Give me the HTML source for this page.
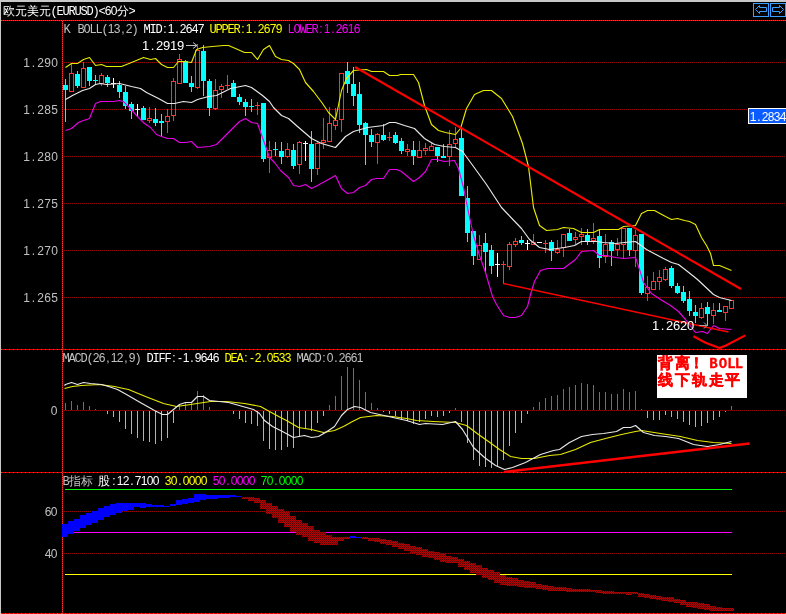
<!DOCTYPE html><html><head><meta charset="utf-8"><style>html,body{margin:0;padding:0;background:#000;overflow:hidden}svg{display:block;will-change:transform}text{font-family:"Liberation Mono",monospace}</style></head><body>
<svg width="786" height="614" viewBox="0 0 786 614">
<defs><pattern id="chk" width="2" height="2" patternUnits="userSpaceOnUse"><rect width="2" height="2" fill="#5c0000"/><rect width="1" height="1" fill="#b80000"/><rect x="1" y="1" width="1" height="1" fill="#b80000"/></pattern></defs>
<rect width="786" height="614" fill="#000"/>
<rect x="0" y="0" width="786" height="2" fill="#c8c8c8"/>
<rect x="0" y="0" width="1" height="614" fill="#c8c8c8"/>
<g shape-rendering="crispEdges">
<line x1="64" y1="62.5" x2="786" y2="62.5" stroke="#980000" stroke-width="1" stroke-dasharray="1 1"/>
<line x1="64" y1="109.5" x2="786" y2="109.5" stroke="#980000" stroke-width="1" stroke-dasharray="1 1"/>
<line x1="64" y1="156.5" x2="786" y2="156.5" stroke="#980000" stroke-width="1" stroke-dasharray="1 1"/>
<line x1="64" y1="203.5" x2="786" y2="203.5" stroke="#980000" stroke-width="1" stroke-dasharray="1 1"/>
<line x1="64" y1="250.5" x2="786" y2="250.5" stroke="#980000" stroke-width="1" stroke-dasharray="1 1"/>
<line x1="64" y1="297.5" x2="786" y2="297.5" stroke="#980000" stroke-width="1" stroke-dasharray="1 1"/>
<line x1="64" y1="410.5" x2="786" y2="410.5" stroke="#980000" stroke-width="1" stroke-dasharray="1 1"/>
<line x1="64" y1="511.5" x2="786" y2="511.5" stroke="#980000" stroke-width="1" stroke-dasharray="1 1"/>
<line x1="64" y1="553.5" x2="786" y2="553.5" stroke="#980000" stroke-width="1" stroke-dasharray="1 1"/>
<rect x="1" y="20" width="785" height="1" fill="#d80000"/>
<line x1="1" y1="20.5" x2="786" y2="20.5" stroke="#e85050" stroke-width="1" stroke-dasharray="1 1"/>
<rect x="1" y="349" width="785" height="1" fill="#e00000"/>
<line x1="1" y1="349.5" x2="786" y2="349.5" stroke="#e85000" stroke-width="1" stroke-dasharray="1 3"/>
<rect x="1" y="472" width="785" height="1" fill="#e00000"/>
<line x1="1" y1="472.5" x2="786" y2="472.5" stroke="#e85000" stroke-width="1" stroke-dasharray="1 3"/>
<rect x="1" y="613" width="785" height="1" fill="#e00000"/>
<line x1="1" y1="613.5" x2="786" y2="613.5" stroke="#e85000" stroke-width="1" stroke-dasharray="1 3"/>
<rect x="62" y="20" width="1" height="594" fill="#c00000"/>
<line x1="62.5" y1="21" x2="62.5" y2="614" stroke="#e04848" stroke-width="1" stroke-dasharray="1 1"/>
<rect x="65" y="489" width="667" height="1" fill="#00ff00"/>
<rect x="65" y="532" width="667" height="1" fill="#ff00ff"/>
<rect x="65" y="574" width="667" height="1" fill="#ffff00"/>
<rect x="62" y="524" width="6" height="13" fill="#0000ff"/>
<rect x="68" y="521" width="6" height="13" fill="#0000ff"/>
<rect x="74" y="519" width="6" height="12" fill="#0000ff"/>
<rect x="80" y="515" width="6" height="13" fill="#0000ff"/>
<rect x="86" y="513" width="6" height="12" fill="#0000ff"/>
<rect x="92" y="511" width="6" height="12" fill="#0000ff"/>
<rect x="98" y="508" width="6" height="12" fill="#0000ff"/>
<rect x="104" y="506" width="6" height="11" fill="#0000ff"/>
<rect x="110" y="504" width="6" height="11" fill="#0000ff"/>
<rect x="116" y="503" width="6" height="10" fill="#0000ff"/>
<rect x="122" y="503" width="6" height="8" fill="#0000ff"/>
<rect x="128" y="503" width="6" height="7" fill="#0000ff"/>
<rect x="134" y="503" width="6" height="4" fill="#0000ff"/>
<rect x="140" y="503" width="6" height="5" fill="#0000ff"/>
<rect x="146" y="504" width="6" height="3" fill="#0000ff"/>
<rect x="152" y="505" width="6" height="2" fill="#0000ff"/>
<rect x="158" y="505" width="6" height="2" fill="#0000ff"/>
<rect x="164" y="506" width="6" height="1" fill="#0000ff"/>
<rect x="170" y="504" width="6" height="2" fill="#0000ff"/>
<rect x="176" y="500" width="6" height="5" fill="#0000ff"/>
<rect x="182" y="499" width="6" height="5" fill="#0000ff"/>
<rect x="188" y="498" width="6" height="5" fill="#0000ff"/>
<rect x="194" y="494" width="6" height="8" fill="#0000ff"/>
<rect x="200" y="494" width="6" height="6" fill="#0000ff"/>
<rect x="206" y="495" width="6" height="4" fill="#0000ff"/>
<rect x="212" y="495" width="6" height="4" fill="#0000ff"/>
<rect x="218" y="495" width="6" height="3" fill="#0000ff"/>
<rect x="224" y="495" width="6" height="3" fill="#0000ff"/>
<rect x="230" y="495" width="6" height="2" fill="#0000ff"/>
<rect x="236" y="496" width="6" height="1" fill="#0000ff"/>
<rect x="242" y="497" width="6" height="2" fill="url(#chk)"/>
<rect x="248" y="497" width="6" height="4" fill="url(#chk)"/>
<rect x="254" y="498" width="6" height="5" fill="url(#chk)"/>
<rect x="260" y="500" width="6" height="9" fill="url(#chk)"/>
<rect x="266" y="503" width="6" height="11" fill="url(#chk)"/>
<rect x="272" y="506" width="6" height="12" fill="url(#chk)"/>
<rect x="278" y="509" width="6" height="14" fill="url(#chk)"/>
<rect x="284" y="512" width="6" height="15" fill="url(#chk)"/>
<rect x="290" y="516" width="6" height="16" fill="url(#chk)"/>
<rect x="296" y="520" width="6" height="15" fill="url(#chk)"/>
<rect x="302" y="523" width="6" height="14" fill="url(#chk)"/>
<rect x="308" y="526" width="6" height="15" fill="url(#chk)"/>
<rect x="314" y="530" width="6" height="13" fill="url(#chk)"/>
<rect x="320" y="532" width="6" height="13" fill="url(#chk)"/>
<rect x="326" y="535" width="6" height="10" fill="url(#chk)"/>
<rect x="332" y="537" width="6" height="8" fill="url(#chk)"/>
<rect x="338" y="537" width="6" height="4" fill="url(#chk)"/>
<rect x="344" y="537" width="6" height="2" fill="url(#chk)"/>
<rect x="350" y="536" width="6" height="2" fill="#0000ff"/>
<rect x="356" y="537" width="6" height="1" fill="#0000ff"/>
<rect x="362" y="537" width="6" height="2" fill="url(#chk)"/>
<rect x="368" y="538" width="6" height="3" fill="url(#chk)"/>
<rect x="374" y="538" width="6" height="4" fill="url(#chk)"/>
<rect x="380" y="539" width="6" height="5" fill="url(#chk)"/>
<rect x="386" y="540" width="6" height="5" fill="url(#chk)"/>
<rect x="392" y="541" width="6" height="6" fill="url(#chk)"/>
<rect x="398" y="543" width="6" height="6" fill="url(#chk)"/>
<rect x="404" y="544" width="6" height="7" fill="url(#chk)"/>
<rect x="410" y="546" width="6" height="7" fill="url(#chk)"/>
<rect x="416" y="547" width="6" height="8" fill="url(#chk)"/>
<rect x="422" y="549" width="6" height="8" fill="url(#chk)"/>
<rect x="428" y="551" width="6" height="7" fill="url(#chk)"/>
<rect x="434" y="552" width="6" height="8" fill="url(#chk)"/>
<rect x="440" y="553" width="6" height="9" fill="url(#chk)"/>
<rect x="446" y="556" width="6" height="7" fill="url(#chk)"/>
<rect x="452" y="557" width="6" height="6" fill="url(#chk)"/>
<rect x="458" y="559" width="6" height="8" fill="url(#chk)"/>
<rect x="464" y="561" width="6" height="9" fill="url(#chk)"/>
<rect x="470" y="563" width="6" height="10" fill="url(#chk)"/>
<rect x="476" y="565" width="6" height="10" fill="url(#chk)"/>
<rect x="482" y="568" width="6" height="10" fill="url(#chk)"/>
<rect x="488" y="570" width="6" height="10" fill="url(#chk)"/>
<rect x="494" y="572" width="6" height="11" fill="url(#chk)"/>
<rect x="500" y="575" width="6" height="10" fill="url(#chk)"/>
<rect x="506" y="577" width="6" height="9" fill="url(#chk)"/>
<rect x="512" y="578" width="6" height="8" fill="url(#chk)"/>
<rect x="518" y="580" width="6" height="7" fill="url(#chk)"/>
<rect x="524" y="581" width="6" height="7" fill="url(#chk)"/>
<rect x="530" y="582" width="6" height="6" fill="url(#chk)"/>
<rect x="536" y="584" width="6" height="5" fill="url(#chk)"/>
<rect x="542" y="585" width="6" height="5" fill="url(#chk)"/>
<rect x="548" y="586" width="6" height="5" fill="url(#chk)"/>
<rect x="554" y="587" width="6" height="4" fill="url(#chk)"/>
<rect x="560" y="587" width="6" height="4" fill="url(#chk)"/>
<rect x="566" y="588" width="6" height="4" fill="url(#chk)"/>
<rect x="572" y="589" width="6" height="3" fill="url(#chk)"/>
<rect x="578" y="589" width="6" height="3" fill="url(#chk)"/>
<rect x="584" y="589" width="6" height="3" fill="url(#chk)"/>
<rect x="590" y="590" width="6" height="2" fill="url(#chk)"/>
<rect x="596" y="590" width="6" height="3" fill="url(#chk)"/>
<rect x="602" y="591" width="6" height="3" fill="url(#chk)"/>
<rect x="608" y="591" width="6" height="3" fill="url(#chk)"/>
<rect x="614" y="592" width="6" height="2" fill="url(#chk)"/>
<rect x="620" y="592" width="6" height="2" fill="url(#chk)"/>
<rect x="626" y="592" width="6" height="3" fill="url(#chk)"/>
<rect x="632" y="592" width="6" height="2" fill="url(#chk)"/>
<rect x="638" y="593" width="6" height="4" fill="url(#chk)"/>
<rect x="644" y="594" width="6" height="4" fill="url(#chk)"/>
<rect x="650" y="595" width="6" height="4" fill="url(#chk)"/>
<rect x="656" y="596" width="6" height="4" fill="url(#chk)"/>
<rect x="662" y="597" width="6" height="4" fill="url(#chk)"/>
<rect x="668" y="597" width="6" height="5" fill="url(#chk)"/>
<rect x="674" y="599" width="6" height="4" fill="url(#chk)"/>
<rect x="680" y="600" width="6" height="5" fill="url(#chk)"/>
<rect x="686" y="602" width="6" height="5" fill="url(#chk)"/>
<rect x="692" y="602" width="6" height="6" fill="url(#chk)"/>
<rect x="698" y="603" width="6" height="6" fill="url(#chk)"/>
<rect x="704" y="604" width="6" height="6" fill="url(#chk)"/>
<rect x="710" y="606" width="6" height="5" fill="url(#chk)"/>
<rect x="716" y="607" width="6" height="4" fill="url(#chk)"/>
<rect x="722" y="608" width="6" height="3" fill="url(#chk)"/>
<rect x="728" y="608" width="6" height="3" fill="url(#chk)"/>
<rect x="65" y="403" width="1" height="7" fill="#ff3232"/>
<rect x="71" y="401" width="1" height="9" fill="#ff3232"/>
<rect x="77" y="405" width="1" height="5" fill="#ff3232"/>
<rect x="83" y="402" width="1" height="8" fill="#ff3232"/>
<rect x="89" y="406" width="1" height="4" fill="#ff3232"/>
<rect x="95" y="409" width="1" height="1" fill="#ff3232"/>
<rect x="107" y="411" width="1" height="3" fill="#00ffff"/>
<rect x="113" y="411" width="1" height="6" fill="#00ffff"/>
<rect x="119" y="411" width="1" height="11" fill="#00ffff"/>
<rect x="125" y="411" width="1" height="18" fill="#00ffff"/>
<rect x="131" y="411" width="1" height="23" fill="#00ffff"/>
<rect x="137" y="411" width="1" height="27" fill="#00ffff"/>
<rect x="143" y="411" width="1" height="30" fill="#00ffff"/>
<rect x="149" y="411" width="1" height="31" fill="#00ffff"/>
<rect x="155" y="411" width="1" height="33" fill="#00ffff"/>
<rect x="161" y="411" width="1" height="30" fill="#00ffff"/>
<rect x="167" y="411" width="1" height="27" fill="#00ffff"/>
<rect x="173" y="411" width="1" height="12" fill="#00ffff"/>
<rect x="179" y="405" width="1" height="5" fill="#ff3232"/>
<rect x="185" y="402" width="1" height="8" fill="#ff3232"/>
<rect x="191" y="402" width="1" height="8" fill="#ff3232"/>
<rect x="197" y="391" width="1" height="19" fill="#ff3232"/>
<rect x="203" y="395" width="1" height="15" fill="#ff3232"/>
<rect x="209" y="407" width="1" height="3" fill="#ff3232"/>
<rect x="233" y="411" width="1" height="3" fill="#00ffff"/>
<rect x="239" y="411" width="1" height="8" fill="#00ffff"/>
<rect x="245" y="411" width="1" height="12" fill="#00ffff"/>
<rect x="251" y="411" width="1" height="13" fill="#00ffff"/>
<rect x="257" y="411" width="1" height="15" fill="#00ffff"/>
<rect x="263" y="411" width="1" height="30" fill="#00ffff"/>
<rect x="269" y="411" width="1" height="38" fill="#00ffff"/>
<rect x="275" y="411" width="1" height="39" fill="#00ffff"/>
<rect x="281" y="411" width="1" height="39" fill="#00ffff"/>
<rect x="287" y="411" width="1" height="36" fill="#00ffff"/>
<rect x="293" y="411" width="1" height="37" fill="#00ffff"/>
<rect x="299" y="411" width="1" height="25" fill="#00ffff"/>
<rect x="305" y="411" width="1" height="18" fill="#00ffff"/>
<rect x="311" y="411" width="1" height="20" fill="#00ffff"/>
<rect x="317" y="411" width="1" height="12" fill="#00ffff"/>
<rect x="323" y="411" width="1" height="5" fill="#00ffff"/>
<rect x="329" y="405" width="1" height="5" fill="#ff3232"/>
<rect x="335" y="396" width="1" height="14" fill="#ff3232"/>
<rect x="341" y="376" width="1" height="34" fill="#ff3232"/>
<rect x="347" y="367" width="1" height="43" fill="#ff3232"/>
<rect x="353" y="368" width="1" height="42" fill="#ff3232"/>
<rect x="359" y="380" width="1" height="30" fill="#ff3232"/>
<rect x="365" y="392" width="1" height="18" fill="#ff3232"/>
<rect x="371" y="403" width="1" height="7" fill="#ff3232"/>
<rect x="377" y="408" width="1" height="2" fill="#ff3232"/>
<rect x="383" y="411" width="1" height="1" fill="#00ffff"/>
<rect x="389" y="411" width="1" height="3" fill="#00ffff"/>
<rect x="395" y="411" width="1" height="5" fill="#00ffff"/>
<rect x="401" y="411" width="1" height="9" fill="#00ffff"/>
<rect x="407" y="411" width="1" height="10" fill="#00ffff"/>
<rect x="413" y="411" width="1" height="13" fill="#00ffff"/>
<rect x="419" y="411" width="1" height="11" fill="#00ffff"/>
<rect x="425" y="411" width="1" height="8" fill="#00ffff"/>
<rect x="431" y="411" width="1" height="5" fill="#00ffff"/>
<rect x="437" y="411" width="1" height="6" fill="#00ffff"/>
<rect x="443" y="411" width="1" height="5" fill="#00ffff"/>
<rect x="449" y="411" width="1" height="2" fill="#00ffff"/>
<rect x="455" y="408" width="1" height="2" fill="#ff3232"/>
<rect x="461" y="411" width="1" height="11" fill="#00ffff"/>
<rect x="467" y="411" width="1" height="32" fill="#00ffff"/>
<rect x="473" y="411" width="1" height="49" fill="#00ffff"/>
<rect x="479" y="411" width="1" height="55" fill="#00ffff"/>
<rect x="485" y="411" width="1" height="56" fill="#00ffff"/>
<rect x="491" y="411" width="1" height="57" fill="#00ffff"/>
<rect x="497" y="411" width="1" height="55" fill="#00ffff"/>
<rect x="503" y="411" width="1" height="49" fill="#00ffff"/>
<rect x="509" y="411" width="1" height="35" fill="#00ffff"/>
<rect x="515" y="411" width="1" height="22" fill="#00ffff"/>
<rect x="521" y="411" width="1" height="12" fill="#00ffff"/>
<rect x="527" y="411" width="1" height="3" fill="#00ffff"/>
<rect x="533" y="407" width="1" height="3" fill="#ff3232"/>
<rect x="539" y="402" width="1" height="8" fill="#ff3232"/>
<rect x="545" y="398" width="1" height="12" fill="#ff3232"/>
<rect x="551" y="396" width="1" height="14" fill="#ff3232"/>
<rect x="557" y="395" width="1" height="15" fill="#ff3232"/>
<rect x="563" y="389" width="1" height="21" fill="#ff3232"/>
<rect x="569" y="387" width="1" height="23" fill="#ff3232"/>
<rect x="575" y="385" width="1" height="25" fill="#ff3232"/>
<rect x="581" y="383" width="1" height="27" fill="#ff3232"/>
<rect x="587" y="384" width="1" height="26" fill="#ff3232"/>
<rect x="593" y="385" width="1" height="25" fill="#ff3232"/>
<rect x="599" y="392" width="1" height="18" fill="#ff3232"/>
<rect x="605" y="392" width="1" height="18" fill="#ff3232"/>
<rect x="611" y="394" width="1" height="16" fill="#ff3232"/>
<rect x="617" y="394" width="1" height="16" fill="#ff3232"/>
<rect x="623" y="389" width="1" height="21" fill="#ff3232"/>
<rect x="629" y="392" width="1" height="18" fill="#ff3232"/>
<rect x="635" y="391" width="1" height="19" fill="#ff3232"/>
<rect x="641" y="409" width="1" height="1" fill="#ff3232"/>
<rect x="647" y="411" width="1" height="7" fill="#00ffff"/>
<rect x="653" y="411" width="1" height="9" fill="#00ffff"/>
<rect x="659" y="411" width="1" height="9" fill="#00ffff"/>
<rect x="665" y="411" width="1" height="4" fill="#00ffff"/>
<rect x="671" y="411" width="1" height="6" fill="#00ffff"/>
<rect x="677" y="411" width="1" height="8" fill="#00ffff"/>
<rect x="683" y="411" width="1" height="11" fill="#00ffff"/>
<rect x="689" y="411" width="1" height="14" fill="#00ffff"/>
<rect x="695" y="411" width="1" height="16" fill="#00ffff"/>
<rect x="701" y="411" width="1" height="15" fill="#00ffff"/>
<rect x="707" y="411" width="1" height="12" fill="#00ffff"/>
<rect x="713" y="411" width="1" height="9" fill="#00ffff"/>
<rect x="719" y="411" width="1" height="6" fill="#00ffff"/>
<rect x="725" y="411" width="1" height="1" fill="#00ffff"/>
<rect x="731" y="406" width="1" height="4" fill="#ff3232"/>
<rect x="65" y="79" width="1" height="43" fill="#00ffff"/>
<rect x="63" y="85" width="5" height="5" fill="#00ffff"/>
<rect x="71" y="64" width="1" height="9" fill="#ff3232"/>
<rect x="71" y="91" width="1" height="1" fill="#ff3232"/>
<rect x="69.5" y="73.5" width="4" height="18" fill="none" stroke="#ff3232" stroke-width="1"/>
<rect x="77" y="71" width="1" height="17" fill="#00ffff"/>
<rect x="75" y="74" width="5" height="12" fill="#00ffff"/>
<rect x="83" y="62" width="1" height="6" fill="#ff3232"/>
<rect x="83" y="87" width="1" height="1" fill="#ff3232"/>
<rect x="81.5" y="68.5" width="4" height="19" fill="none" stroke="#ff3232" stroke-width="1"/>
<rect x="89" y="67" width="1" height="19" fill="#00ffff"/>
<rect x="87" y="67" width="5" height="14" fill="#00ffff"/>
<rect x="95" y="75" width="1" height="10" fill="#00ffff"/>
<rect x="93" y="80" width="5" height="1" fill="#00ffff"/>
<rect x="101" y="73" width="1" height="2" fill="#ff3232"/>
<rect x="101" y="83" width="1" height="3" fill="#ff3232"/>
<rect x="99.5" y="75.5" width="4" height="8" fill="none" stroke="#ff3232" stroke-width="1"/>
<rect x="107" y="75" width="1" height="12" fill="#00ffff"/>
<rect x="105" y="77" width="5" height="6" fill="#00ffff"/>
<rect x="113" y="78" width="1" height="10" fill="#ffffff"/>
<rect x="111" y="83" width="5" height="1" fill="#ffffff"/>
<rect x="119" y="81" width="1" height="17" fill="#00ffff"/>
<rect x="117" y="85" width="5" height="7" fill="#00ffff"/>
<rect x="125" y="86" width="1" height="23" fill="#00ffff"/>
<rect x="123" y="92" width="5" height="14" fill="#00ffff"/>
<rect x="131" y="102" width="1" height="17" fill="#00ffff"/>
<rect x="129" y="104" width="5" height="7" fill="#00ffff"/>
<rect x="137" y="104" width="1" height="13" fill="#ffffff"/>
<rect x="135" y="109" width="5" height="1" fill="#ffffff"/>
<rect x="143" y="106" width="1" height="14" fill="#00ffff"/>
<rect x="141" y="108" width="5" height="12" fill="#00ffff"/>
<rect x="149" y="107" width="1" height="11" fill="#ff3232"/>
<rect x="149" y="120" width="1" height="3" fill="#ff3232"/>
<rect x="147.5" y="118.5" width="4" height="2" fill="none" stroke="#ff3232" stroke-width="1"/>
<rect x="155" y="108" width="1" height="18" fill="#00ffff"/>
<rect x="153" y="119" width="5" height="4" fill="#00ffff"/>
<rect x="161" y="114" width="1" height="22" fill="#00ffff"/>
<rect x="159" y="121" width="5" height="2" fill="#00ffff"/>
<rect x="167" y="109" width="1" height="7" fill="#ff3232"/>
<rect x="167" y="121" width="1" height="12" fill="#ff3232"/>
<rect x="165.5" y="116.5" width="4" height="5" fill="none" stroke="#ff3232" stroke-width="1"/>
<rect x="173" y="78" width="1" height="3" fill="#ff3232"/>
<rect x="173" y="115" width="1" height="6" fill="#ff3232"/>
<rect x="171.5" y="81.5" width="4" height="34" fill="none" stroke="#ff3232" stroke-width="1"/>
<rect x="179" y="54" width="1" height="5" fill="#ff3232"/>
<rect x="177.5" y="59.5" width="4" height="24" fill="none" stroke="#ff3232" stroke-width="1"/>
<rect x="185" y="60" width="1" height="23" fill="#00ffff"/>
<rect x="183" y="61" width="5" height="22" fill="#00ffff"/>
<rect x="191" y="76" width="1" height="16" fill="#00ffff"/>
<rect x="189" y="83" width="5" height="4" fill="#00ffff"/>
<rect x="197" y="44" width="1" height="6" fill="#ff3232"/>
<rect x="197" y="87" width="1" height="2" fill="#ff3232"/>
<rect x="195.5" y="50.5" width="4" height="37" fill="none" stroke="#ff3232" stroke-width="1"/>
<rect x="203" y="45" width="1" height="51" fill="#00ffff"/>
<rect x="201" y="51" width="5" height="30" fill="#00ffff"/>
<rect x="209" y="79" width="1" height="37" fill="#00ffff"/>
<rect x="207" y="81" width="5" height="27" fill="#00ffff"/>
<rect x="215" y="79" width="1" height="11" fill="#ff3232"/>
<rect x="215" y="108" width="1" height="2" fill="#ff3232"/>
<rect x="213.5" y="90.5" width="4" height="18" fill="none" stroke="#ff3232" stroke-width="1"/>
<rect x="221" y="84" width="1" height="2" fill="#ff3232"/>
<rect x="221" y="89" width="1" height="9" fill="#ff3232"/>
<rect x="219.5" y="86.5" width="4" height="3" fill="none" stroke="#ff3232" stroke-width="1"/>
<rect x="227" y="75" width="1" height="14" fill="#ff3232"/>
<rect x="225" y="85" width="5" height="1" fill="#ff3232"/>
<rect x="233" y="80" width="1" height="17" fill="#00ffff"/>
<rect x="231" y="83" width="5" height="14" fill="#00ffff"/>
<rect x="239" y="94" width="1" height="11" fill="#00ffff"/>
<rect x="237" y="97" width="5" height="5" fill="#00ffff"/>
<rect x="245" y="99" width="1" height="17" fill="#00ffff"/>
<rect x="243" y="102" width="5" height="5" fill="#00ffff"/>
<rect x="251" y="99" width="1" height="13" fill="#00ffff"/>
<rect x="249" y="106" width="5" height="1" fill="#00ffff"/>
<rect x="257" y="102" width="1" height="13" fill="#ff3232"/>
<rect x="255" y="105" width="5" height="1" fill="#ff3232"/>
<rect x="263" y="103" width="1" height="59" fill="#00ffff"/>
<rect x="261" y="103" width="5" height="56" fill="#00ffff"/>
<rect x="269" y="141" width="1" height="9" fill="#ff3232"/>
<rect x="269" y="157" width="1" height="16" fill="#ff3232"/>
<rect x="267.5" y="150.5" width="4" height="7" fill="none" stroke="#ff3232" stroke-width="1"/>
<rect x="275" y="142" width="1" height="14" fill="#00ffff"/>
<rect x="273" y="149" width="5" height="1" fill="#00ffff"/>
<rect x="281" y="142" width="1" height="22" fill="#00ffff"/>
<rect x="279" y="151" width="5" height="6" fill="#00ffff"/>
<rect x="287" y="143" width="1" height="6" fill="#ff3232"/>
<rect x="287" y="156" width="1" height="2" fill="#ff3232"/>
<rect x="285.5" y="149.5" width="4" height="7" fill="none" stroke="#ff3232" stroke-width="1"/>
<rect x="293" y="144" width="1" height="25" fill="#00ffff"/>
<rect x="291" y="150" width="5" height="16" fill="#00ffff"/>
<rect x="299" y="141" width="1" height="1" fill="#ff3232"/>
<rect x="299" y="164" width="1" height="10" fill="#ff3232"/>
<rect x="297.5" y="142.5" width="4" height="22" fill="none" stroke="#ff3232" stroke-width="1"/>
<rect x="305" y="141" width="1" height="20" fill="#ffffff"/>
<rect x="303" y="143" width="5" height="1" fill="#ffffff"/>
<rect x="311" y="131" width="1" height="51" fill="#00ffff"/>
<rect x="309" y="144" width="5" height="25" fill="#00ffff"/>
<rect x="317" y="141" width="1" height="2" fill="#ff3232"/>
<rect x="317" y="168" width="1" height="7" fill="#ff3232"/>
<rect x="315.5" y="143.5" width="4" height="25" fill="none" stroke="#ff3232" stroke-width="1"/>
<rect x="323" y="118" width="1" height="22" fill="#ff3232"/>
<rect x="323" y="142" width="1" height="7" fill="#ff3232"/>
<rect x="321.5" y="140.5" width="4" height="2" fill="none" stroke="#ff3232" stroke-width="1"/>
<rect x="329" y="107" width="1" height="16" fill="#ff3232"/>
<rect x="327.5" y="123.5" width="4" height="18" fill="none" stroke="#ff3232" stroke-width="1"/>
<rect x="335" y="108" width="1" height="12" fill="#ff3232"/>
<rect x="335" y="125" width="1" height="5" fill="#ff3232"/>
<rect x="333.5" y="120.5" width="4" height="5" fill="none" stroke="#ff3232" stroke-width="1"/>
<rect x="341" y="119" width="1" height="13" fill="#ff3232"/>
<rect x="339.5" y="73.5" width="4" height="46" fill="none" stroke="#ff3232" stroke-width="1"/>
<rect x="347" y="62" width="1" height="31" fill="#00ffff"/>
<rect x="345" y="71" width="5" height="13" fill="#00ffff"/>
<rect x="353" y="67" width="1" height="39" fill="#00ffff"/>
<rect x="351" y="84" width="5" height="12" fill="#00ffff"/>
<rect x="359" y="82" width="1" height="51" fill="#00ffff"/>
<rect x="357" y="94" width="5" height="31" fill="#00ffff"/>
<rect x="365" y="122" width="1" height="43" fill="#00ffff"/>
<rect x="363" y="123" width="5" height="12" fill="#00ffff"/>
<rect x="371" y="129" width="1" height="18" fill="#00ffff"/>
<rect x="369" y="135" width="5" height="7" fill="#00ffff"/>
<rect x="377" y="133" width="1" height="1" fill="#ff3232"/>
<rect x="377" y="142" width="1" height="22" fill="#ff3232"/>
<rect x="375.5" y="134.5" width="4" height="8" fill="none" stroke="#ff3232" stroke-width="1"/>
<rect x="383" y="124" width="1" height="17" fill="#00ffff"/>
<rect x="381" y="135" width="5" height="5" fill="#00ffff"/>
<rect x="389" y="132" width="1" height="9" fill="#ff3232"/>
<rect x="387" y="137" width="5" height="1" fill="#ff3232"/>
<rect x="395" y="132" width="1" height="12" fill="#00ffff"/>
<rect x="393" y="135" width="5" height="8" fill="#00ffff"/>
<rect x="401" y="138" width="1" height="16" fill="#00ffff"/>
<rect x="399" y="141" width="5" height="10" fill="#00ffff"/>
<rect x="407" y="144" width="1" height="5" fill="#ff3232"/>
<rect x="407" y="151" width="1" height="5" fill="#ff3232"/>
<rect x="405.5" y="149.5" width="4" height="2" fill="none" stroke="#ff3232" stroke-width="1"/>
<rect x="413" y="141" width="1" height="24" fill="#00ffff"/>
<rect x="411" y="150" width="5" height="6" fill="#00ffff"/>
<rect x="419" y="141" width="1" height="9" fill="#ff3232"/>
<rect x="419" y="157" width="1" height="1" fill="#ff3232"/>
<rect x="417.5" y="150.5" width="4" height="7" fill="none" stroke="#ff3232" stroke-width="1"/>
<rect x="425" y="143" width="1" height="5" fill="#ff3232"/>
<rect x="425" y="150" width="1" height="5" fill="#ff3232"/>
<rect x="423.5" y="148.5" width="4" height="2" fill="none" stroke="#ff3232" stroke-width="1"/>
<rect x="431" y="143" width="1" height="3" fill="#ff3232"/>
<rect x="429.5" y="146.5" width="4" height="4" fill="none" stroke="#ff3232" stroke-width="1"/>
<rect x="437" y="147" width="1" height="15" fill="#00ffff"/>
<rect x="435" y="147" width="5" height="9" fill="#00ffff"/>
<rect x="443" y="144" width="1" height="14" fill="#00ffff"/>
<rect x="441" y="156" width="5" height="2" fill="#00ffff"/>
<rect x="449" y="130" width="1" height="14" fill="#ff3232"/>
<rect x="449" y="156" width="1" height="10" fill="#ff3232"/>
<rect x="447.5" y="144.5" width="4" height="12" fill="none" stroke="#ff3232" stroke-width="1"/>
<rect x="455" y="127" width="1" height="12" fill="#ff3232"/>
<rect x="455" y="143" width="1" height="4" fill="#ff3232"/>
<rect x="453.5" y="139.5" width="4" height="4" fill="none" stroke="#ff3232" stroke-width="1"/>
<rect x="461" y="129" width="1" height="67" fill="#00ffff"/>
<rect x="459" y="138" width="5" height="58" fill="#00ffff"/>
<rect x="467" y="186" width="1" height="56" fill="#00ffff"/>
<rect x="465" y="198" width="5" height="35" fill="#00ffff"/>
<rect x="473" y="231" width="1" height="34" fill="#00ffff"/>
<rect x="471" y="231" width="5" height="25" fill="#00ffff"/>
<rect x="479" y="235" width="1" height="10" fill="#ff3232"/>
<rect x="477.5" y="245.5" width="4" height="14" fill="none" stroke="#ff3232" stroke-width="1"/>
<rect x="485" y="233" width="1" height="39" fill="#00ffff"/>
<rect x="483" y="243" width="5" height="9" fill="#00ffff"/>
<rect x="491" y="245" width="1" height="29" fill="#00ffff"/>
<rect x="489" y="250" width="5" height="16" fill="#00ffff"/>
<rect x="497" y="253" width="1" height="24" fill="#ffffff"/>
<rect x="495" y="264" width="5" height="1" fill="#ffffff"/>
<rect x="503" y="261" width="1" height="23" fill="#ff3232"/>
<rect x="501" y="264" width="5" height="1" fill="#ff3232"/>
<rect x="509" y="242" width="1" height="2" fill="#ff3232"/>
<rect x="509" y="266" width="1" height="4" fill="#ff3232"/>
<rect x="507.5" y="244.5" width="4" height="22" fill="none" stroke="#ff3232" stroke-width="1"/>
<rect x="515" y="238" width="1" height="3" fill="#ff3232"/>
<rect x="515" y="244" width="1" height="3" fill="#ff3232"/>
<rect x="513.5" y="241.5" width="4" height="3" fill="none" stroke="#ff3232" stroke-width="1"/>
<rect x="521" y="236" width="1" height="9" fill="#00ffff"/>
<rect x="519" y="240" width="5" height="3" fill="#00ffff"/>
<rect x="527" y="240" width="1" height="10" fill="#ffffff"/>
<rect x="525" y="243" width="5" height="1" fill="#ffffff"/>
<rect x="533" y="234" width="1" height="8" fill="#ff3232"/>
<rect x="533" y="244" width="1" height="1" fill="#ff3232"/>
<rect x="531.5" y="242.5" width="4" height="2" fill="none" stroke="#ff3232" stroke-width="1"/>
<rect x="539" y="242" width="1" height="1" fill="#ffffff"/>
<rect x="537" y="242" width="5" height="1" fill="#ffffff"/>
<rect x="545" y="240" width="1" height="13" fill="#ff3232"/>
<rect x="543" y="243" width="5" height="1" fill="#ff3232"/>
<rect x="551" y="240" width="1" height="21" fill="#00ffff"/>
<rect x="549" y="242" width="5" height="9" fill="#00ffff"/>
<rect x="557" y="240" width="1" height="9" fill="#ff3232"/>
<rect x="557" y="252" width="1" height="2" fill="#ff3232"/>
<rect x="555.5" y="249.5" width="4" height="3" fill="none" stroke="#ff3232" stroke-width="1"/>
<rect x="563" y="247" width="1" height="10" fill="#ff3232"/>
<rect x="561.5" y="234.5" width="4" height="13" fill="none" stroke="#ff3232" stroke-width="1"/>
<rect x="569" y="229" width="1" height="12" fill="#00ffff"/>
<rect x="567" y="233" width="5" height="8" fill="#00ffff"/>
<rect x="575" y="232" width="1" height="5" fill="#ff3232"/>
<rect x="575" y="239" width="1" height="5" fill="#ff3232"/>
<rect x="573.5" y="237.5" width="4" height="2" fill="none" stroke="#ff3232" stroke-width="1"/>
<rect x="581" y="228" width="1" height="6" fill="#ff3232"/>
<rect x="581" y="236" width="1" height="9" fill="#ff3232"/>
<rect x="579.5" y="234.5" width="4" height="2" fill="none" stroke="#ff3232" stroke-width="1"/>
<rect x="587" y="229" width="1" height="16" fill="#00ffff"/>
<rect x="585" y="235" width="5" height="7" fill="#00ffff"/>
<rect x="593" y="223" width="1" height="15" fill="#ff3232"/>
<rect x="593" y="240" width="1" height="4" fill="#ff3232"/>
<rect x="591.5" y="238.5" width="4" height="2" fill="none" stroke="#ff3232" stroke-width="1"/>
<rect x="599" y="230" width="1" height="38" fill="#00ffff"/>
<rect x="597" y="236" width="5" height="22" fill="#00ffff"/>
<rect x="605" y="234" width="1" height="10" fill="#ff3232"/>
<rect x="605" y="256" width="1" height="7" fill="#ff3232"/>
<rect x="603.5" y="244.5" width="4" height="12" fill="none" stroke="#ff3232" stroke-width="1"/>
<rect x="611" y="240" width="1" height="26" fill="#00ffff"/>
<rect x="609" y="242" width="5" height="9" fill="#00ffff"/>
<rect x="617" y="238" width="1" height="6" fill="#ff3232"/>
<rect x="617" y="249" width="1" height="7" fill="#ff3232"/>
<rect x="615.5" y="244.5" width="4" height="5" fill="none" stroke="#ff3232" stroke-width="1"/>
<rect x="623" y="244" width="1" height="14" fill="#ff3232"/>
<rect x="621.5" y="228.5" width="4" height="16" fill="none" stroke="#ff3232" stroke-width="1"/>
<rect x="629" y="228" width="1" height="28" fill="#00ffff"/>
<rect x="627" y="228" width="5" height="22" fill="#00ffff"/>
<rect x="635" y="230" width="1" height="5" fill="#ff3232"/>
<rect x="635" y="250" width="1" height="17" fill="#ff3232"/>
<rect x="633.5" y="235.5" width="4" height="15" fill="none" stroke="#ff3232" stroke-width="1"/>
<rect x="641" y="234" width="1" height="61" fill="#00ffff"/>
<rect x="639" y="234" width="5" height="59" fill="#00ffff"/>
<rect x="647" y="276" width="1" height="11" fill="#ff3232"/>
<rect x="647" y="293" width="1" height="8" fill="#ff3232"/>
<rect x="645.5" y="287.5" width="4" height="6" fill="none" stroke="#ff3232" stroke-width="1"/>
<rect x="653" y="272" width="1" height="9" fill="#ff3232"/>
<rect x="651.5" y="281.5" width="4" height="8" fill="none" stroke="#ff3232" stroke-width="1"/>
<rect x="659" y="270" width="1" height="7" fill="#ff3232"/>
<rect x="659" y="281" width="1" height="9" fill="#ff3232"/>
<rect x="657.5" y="277.5" width="4" height="4" fill="none" stroke="#ff3232" stroke-width="1"/>
<rect x="665" y="267" width="1" height="2" fill="#ff3232"/>
<rect x="665" y="279" width="1" height="2" fill="#ff3232"/>
<rect x="663.5" y="269.5" width="4" height="10" fill="none" stroke="#ff3232" stroke-width="1"/>
<rect x="671" y="266" width="1" height="22" fill="#00ffff"/>
<rect x="669" y="268" width="5" height="18" fill="#00ffff"/>
<rect x="677" y="283" width="1" height="11" fill="#00ffff"/>
<rect x="675" y="286" width="5" height="7" fill="#00ffff"/>
<rect x="683" y="286" width="1" height="17" fill="#00ffff"/>
<rect x="681" y="292" width="5" height="9" fill="#00ffff"/>
<rect x="689" y="291" width="1" height="25" fill="#00ffff"/>
<rect x="687" y="299" width="5" height="12" fill="#00ffff"/>
<rect x="695" y="305" width="1" height="18" fill="#00ffff"/>
<rect x="693" y="312" width="5" height="4" fill="#00ffff"/>
<rect x="701" y="303" width="1" height="5" fill="#ff3232"/>
<rect x="701" y="317" width="1" height="2" fill="#ff3232"/>
<rect x="699.5" y="308.5" width="4" height="9" fill="none" stroke="#ff3232" stroke-width="1"/>
<rect x="707" y="302" width="1" height="24" fill="#00ffff"/>
<rect x="705" y="307" width="5" height="7" fill="#00ffff"/>
<rect x="713" y="303" width="1" height="7" fill="#ff3232"/>
<rect x="713" y="315" width="1" height="9" fill="#ff3232"/>
<rect x="711.5" y="310.5" width="4" height="5" fill="none" stroke="#ff3232" stroke-width="1"/>
<rect x="719" y="303" width="1" height="9" fill="#00ffff"/>
<rect x="717" y="310" width="5" height="2" fill="#00ffff"/>
<rect x="725" y="312" width="1" height="9" fill="#ff3232"/>
<rect x="723.5" y="306.5" width="4" height="6" fill="none" stroke="#ff3232" stroke-width="1"/>
<rect x="731" y="308" width="1" height="1" fill="#ff3232"/>
<rect x="729.5" y="300.5" width="4" height="8" fill="none" stroke="#ff3232" stroke-width="1"/>
</g>
<polyline points="65.5,67.5 71.5,63.5 77.5,63.5 83.5,59.5 89.5,57.5 95.5,65.5 101.5,64.5 106.5,66.5 121.5,66.5 131.5,62.5 143.5,57.5 150.5,59.5 155.5,58.5 161.5,64.5 167.5,67.5 173.5,67.5 178.5,61.5 183.5,61.5 191.5,62.5 196.5,49.5 202.5,47.5 212.5,46.5 223.5,45.5 228.5,45.5 235.5,48.5 244.5,52.5 251.5,52.5 257.5,59.5 263.5,49.5 269.5,45.5 275.5,56.5 281.5,59.5 288.5,60.5 293.5,63.5 299.5,69.5 305.5,82.5 313.5,91.5 322.5,103.5 328.5,112.5 335.5,119.5 341.5,90.5 346.5,78.5 353.5,70.5 366.5,69.5 371.5,71.5 383.5,71.5 389.5,75.5 397.5,75.5 400.5,74.5 413.5,74.5 418.5,82.5 424.5,105.5 431.5,124.5 438.5,130.5 445.5,132.5 455.5,134.5 460.5,128.5 466.5,108.5 474.5,94.5 483.5,90.5 491.5,90.5 501.5,98.5 512.5,116.5 522.5,143.5 528.5,166.5 533.5,207.5 539.5,225.5 546.5,230.5 557.5,229.5 563.5,227.5 573.5,228.5 581.5,232.5 593.5,232.5 599.5,229.5 618.5,229.5 623.5,226.5 635.5,225.5 641.5,213.5 647.5,210.5 654.5,210.5 665.5,216.5 671.5,219.5 677.5,218.5 684.5,220.5 689.5,221.5 695.5,224.5 701.5,237.5 706.5,245.5 710.5,253.5 713.5,265.5 719.5,265.5 731.5,270.5" fill="none" stroke="#e8e800" stroke-width="1.15" stroke-linejoin="round"/>
<polyline points="65.5,99.5 72.5,95.5 82.5,90.5 89.5,88.5 95.5,84.5 100.5,83.5 106.5,84.5 119.5,83.5 131.5,86.5 140.5,88.5 146.5,92.5 158.5,98.5 167.5,103.5 174.5,103.5 183.5,101.5 191.5,102.5 197.5,99.5 208.5,96.5 216.5,95.5 230.5,88.5 245.5,85.5 251.5,87.5 262.5,95.5 269.5,101.5 273.5,107.5 281.5,115.5 288.5,118.5 297.5,126.5 311.5,138.5 321.5,143.5 335.5,147.5 345.5,136.5 353.5,131.5 367.5,127.5 383.5,125.5 389.5,122.5 395.5,122.5 404.5,125.5 414.5,128.5 424.5,138.5 434.5,144.5 444.5,146.5 455.5,147.5 462.5,151.5 473.5,166.5 486.5,184.5 501.5,207.5 521.5,228.5 529.5,239.5 539.5,247.5 549.5,249.5 564.5,247.5 574.5,245.5 581.5,241.5 596.5,241.5 603.5,242.5 615.5,243.5 624.5,242.5 635.5,241.5 646.5,249.5 663.5,258.5 671.5,262.5 678.5,264.5 687.5,271.5 697.5,279.5 713.5,294.5 719.5,297.5 731.5,300.5" fill="none" stroke="#e8e8e8" stroke-width="1.15" stroke-linejoin="round"/>
<polyline points="65.5,130.5 71.5,128.5 78.5,122.5 83.5,120.5 89.5,118.5 95.5,103.5 100.5,101.5 113.5,101.5 119.5,100.5 123.5,101.5 129.5,107.5 136.5,115.5 144.5,123.5 150.5,127.5 156.5,134.5 161.5,136.5 167.5,138.5 173.5,138.5 179.5,142.5 185.5,142.5 191.5,141.5 197.5,147.5 209.5,146.5 216.5,144.5 225.5,135.5 239.5,121.5 245.5,118.5 251.5,122.5 257.5,123.5 262.5,137.5 269.5,157.5 274.5,162.5 280.5,170.5 288.5,177.5 293.5,185.5 299.5,186.5 305.5,184.5 311.5,188.5 317.5,185.5 335.5,175.5 341.5,188.5 347.5,193.5 353.5,192.5 359.5,187.5 365.5,185.5 371.5,179.5 376.5,178.5 383.5,178.5 389.5,169.5 396.5,169.5 401.5,171.5 413.5,181.5 419.5,177.5 425.5,171.5 431.5,159.5 436.5,159.5 444.5,161.5 454.5,160.5 458.5,168.5 463.5,187.5 468.5,212.5 473.5,235.5 479.5,255.5 485.5,272.5 492.5,296.5 496.5,304.5 503.5,315.5 509.5,317.5 515.5,317.5 521.5,315.5 527.5,306.5 530.5,294.5 534.5,281.5 540.5,270.5 547.5,268.5 563.5,268.5 575.5,259.5 581.5,251.5 593.5,250.5 599.5,255.5 606.5,255.5 615.5,257.5 623.5,258.5 635.5,257.5 640.5,272.5 643.5,282.5 651.5,293.5 660.5,299.5 670.5,305.5 678.5,311.5 685.5,319.5 695.5,332.5 702.5,331.5 707.5,333.5 713.5,325.5 719.5,328.5 731.5,329.5" fill="none" stroke="#e800e8" stroke-width="1.15" stroke-linejoin="round"/>
<polyline points="64.5,388.5 72.5,386.5 81.5,385.5 99.5,384.5 114.5,386.5 123.5,388.5 128.5,389.5 145.5,396.5 163.5,403.5 176.5,406.5 190.5,404.5 210.5,401.5 226.5,401.5 244.5,403.5 260.5,406.5 269.5,411.5 280.5,417.5 286.5,420.5 298.5,427.5 311.5,429.5 323.5,432.5 334.5,430.5 343.5,426.5 352.5,421.5 360.5,417.5 376.5,415.5 392.5,416.5 406.5,418.5 416.5,420.5 433.5,421.5 455.5,422.5 466.5,425.5 478.5,434.5 488.5,441.5 499.5,449.5 510.5,456.5 521.5,458.5 534.5,458.5 549.5,455.5 560.5,454.5 575.5,449.5 590.5,442.5 605.5,438.5 621.5,434.5 635.5,431.5 641.5,430.5 660.5,433.5 680.5,436.5 697.5,440.5 713.5,442.5 731.5,443.5" fill="none" stroke="#e8e800" stroke-width="1.15" stroke-linejoin="round"/>
<polyline points="64.5,385.5 65.5,384.5 71.5,382.5 77.5,384.5 83.5,382.5 90.5,383.5 101.5,384.5 108.5,386.5 117.5,389.5 126.5,394.5 138.5,401.5 154.5,410.5 162.5,414.5 167.5,414.5 179.5,404.5 185.5,402.5 191.5,402.5 197.5,396.5 203.5,396.5 209.5,400.5 228.5,402.5 253.5,409.5 259.5,413.5 264.5,420.5 272.5,426.5 282.5,431.5 293.5,437.5 304.5,435.5 311.5,437.5 318.5,436.5 325.5,432.5 334.5,426.5 341.5,415.5 347.5,409.5 354.5,406.5 360.5,407.5 370.5,412.5 388.5,416.5 406.5,420.5 419.5,424.5 425.5,423.5 442.5,424.5 455.5,421.5 462.5,429.5 473.5,447.5 484.5,457.5 495.5,465.5 504.5,469.5 512.5,467.5 525.5,462.5 540.5,454.5 553.5,450.5 559.5,449.5 569.5,442.5 581.5,436.5 592.5,434.5 603.5,433.5 616.5,431.5 623.5,427.5 630.5,427.5 635.5,425.5 643.5,432.5 654.5,435.5 665.5,436.5 678.5,438.5 693.5,444.5 707.5,446.5 719.5,444.5 731.5,441.5" fill="none" stroke="#e8e8e8" stroke-width="1.15" stroke-linejoin="round"/>
<line x1="355" y1="67" x2="741" y2="289" stroke="#ff0000" stroke-width="2.1"/>
<polyline points="503.5,283.5 728.5,332" fill="none" stroke="#ff0000" stroke-width="1.3"/>
<line x1="504" y1="472" x2="749.5" y2="443.5" stroke="#ff0000" stroke-width="2.6"/>
<polyline points="693.4,336.3 705.6,342.7 719.4,348.1 725.5,345.8 745.3,335.4" fill="none" stroke="#ff0000" stroke-width="2.2" stroke-linejoin="round"/>
<g opacity="0.999">
<text y="15" fill="#fff" text-anchor="middle"><tspan x="9 21 33 45 54 60 66 72 78 84 90 96 102" style='font-family:"Liberation Mono", monospace;font-size:12px'>欧元美元(EURUSD)&lt;</tspan><tspan x="108 114" style='font-family:"Liberation Sans", sans-serif;font-size:12px'>60</tspan><tspan x="123 132" style='font-family:"Liberation Mono", monospace;font-size:12px'>分&gt;</tspan></text>
<text y="33" fill="#c0c0c0" text-anchor="middle"><tspan x="67" style='font-family:"Liberation Mono", monospace;font-size:12px'>K</tspan></text>
<text y="33" fill="#c0c0c0" text-anchor="middle"><tspan x="81 87 93 99 105" style='font-family:"Liberation Mono", monospace;font-size:12px'>BOLL(</tspan><tspan x="111 117 123 129" style='font-family:"Liberation Sans", sans-serif;font-size:12px'>13,2</tspan><tspan x="135" style='font-family:"Liberation Mono", monospace;font-size:12px'>)</tspan></text>
<text y="33" fill="#ffffff" text-anchor="middle"><tspan x="147 153 159" style='font-family:"Liberation Mono", monospace;font-size:12px'>MID</tspan><tspan x="165 171 177 183 189 195 201" style='font-family:"Liberation Sans", sans-serif;font-size:12px'>:1.2647</tspan></text>
<text y="33" fill="#ffff00" text-anchor="middle"><tspan x="213 219 225 231 237" style='font-family:"Liberation Mono", monospace;font-size:12px'>UPPER</tspan><tspan x="243 249 255 261 267 273 279" style='font-family:"Liberation Sans", sans-serif;font-size:12px'>:1.2679</tspan></text>
<text y="33" fill="#ff00ff" text-anchor="middle"><tspan x="291 297 303 309 315" style='font-family:"Liberation Mono", monospace;font-size:12px'>LOWER</tspan><tspan x="321 327 333 339 345 351 357" style='font-family:"Liberation Sans", sans-serif;font-size:12px'>:1.2616</tspan></text>
<text y="67" fill="#c0c0c0" text-anchor="middle"><tspan x="26.5 33.5 40.5 47.5 54.5" style='font-family:"Liberation Sans", sans-serif;font-size:12px'>1.290</tspan></text>
<text y="114" fill="#c0c0c0" text-anchor="middle"><tspan x="26.5 33.5 40.5 47.5 54.5" style='font-family:"Liberation Sans", sans-serif;font-size:12px'>1.285</tspan></text>
<text y="161" fill="#c0c0c0" text-anchor="middle"><tspan x="26.5 33.5 40.5 47.5 54.5" style='font-family:"Liberation Sans", sans-serif;font-size:12px'>1.280</tspan></text>
<text y="208" fill="#c0c0c0" text-anchor="middle"><tspan x="26.5 33.5 40.5 47.5 54.5" style='font-family:"Liberation Sans", sans-serif;font-size:12px'>1.275</tspan></text>
<text y="255" fill="#c0c0c0" text-anchor="middle"><tspan x="26.5 33.5 40.5 47.5 54.5" style='font-family:"Liberation Sans", sans-serif;font-size:12px'>1.270</tspan></text>
<text y="302" fill="#c0c0c0" text-anchor="middle"><tspan x="26.5 33.5 40.5 47.5 54.5" style='font-family:"Liberation Sans", sans-serif;font-size:12px'>1.265</tspan></text>
<text y="362" fill="#c0c0c0" text-anchor="middle"><tspan x="66 72 78 84 90" style='font-family:"Liberation Mono", monospace;font-size:12px'>MACD(</tspan><tspan x="96 102 108 114 120 126 132" style='font-family:"Liberation Sans", sans-serif;font-size:12px'>26,12,9</tspan><tspan x="138" style='font-family:"Liberation Mono", monospace;font-size:12px'>)</tspan></text>
<text y="362" fill="#ffffff" text-anchor="middle"><tspan x="150 156 162 168" style='font-family:"Liberation Mono", monospace;font-size:12px'>DIFF</tspan><tspan x="174 180 186 192 198 204 210 216" style='font-family:"Liberation Sans", sans-serif;font-size:12px'>:-1.9646</tspan></text>
<text y="362" fill="#ffff00" text-anchor="middle"><tspan x="228 234 240" style='font-family:"Liberation Mono", monospace;font-size:12px'>DEA</tspan><tspan x="246 252 258 264 270 276 282 288" style='font-family:"Liberation Sans", sans-serif;font-size:12px'>:-2.0533</tspan></text>
<text y="362" fill="#c0c0c0" text-anchor="middle"><tspan x="300 306 312 318" style='font-family:"Liberation Mono", monospace;font-size:12px'>MACD</tspan><tspan x="324 330 336 342 348 354 360" style='font-family:"Liberation Sans", sans-serif;font-size:12px'>:0.2661</tspan></text>
<text y="415" fill="#c0c0c0" text-anchor="middle"><tspan x="54" style='font-family:"Liberation Sans", sans-serif;font-size:12px'>0</tspan></text>
<text y="485" fill="#c0c0c0" text-anchor="middle"><tspan x="66 75 87" style='font-family:"Liberation Mono", monospace;font-size:12px'>B指标</tspan></text>
<text y="485" fill="#ffffff" text-anchor="middle"><tspan x="104" style='font-family:"Liberation Mono", monospace;font-size:12px'>股</tspan></text>
<text y="485" fill="#ffffff" text-anchor="middle"><tspan x="114 120 126 132 138 144 150 156" style='font-family:"Liberation Sans", sans-serif;font-size:12px'>:12.7100</tspan></text>
<text y="485" fill="#ffff00" text-anchor="middle"><tspan x="168 174 180 186 192 198 204" style='font-family:"Liberation Sans", sans-serif;font-size:12px'>30.0000</tspan></text>
<text y="485" fill="#ff00ff" text-anchor="middle"><tspan x="216 222 228 234 240 246 252" style='font-family:"Liberation Sans", sans-serif;font-size:12px'>50.0000</tspan></text>
<text y="485" fill="#00ff00" text-anchor="middle"><tspan x="264 270 276 282 288 294 300" style='font-family:"Liberation Sans", sans-serif;font-size:12px'>70.0000</tspan></text>
<text y="516" fill="#c0c0c0" text-anchor="middle"><tspan x="48 54" style='font-family:"Liberation Sans", sans-serif;font-size:12px'>60</tspan></text>
<text y="558" fill="#c0c0c0" text-anchor="middle"><tspan x="48 54" style='font-family:"Liberation Sans", sans-serif;font-size:12px'>40</tspan></text>
<text y="50" fill="#ffffff" text-anchor="middle"><tspan x="145.5 152.5 159.5 166.5 173.5 180.5" style='font-family:"Liberation Sans", sans-serif;font-size:13px'>1.2919</tspan></text>
<path d="M186,45.5 H197 M193,42.5 L197,45.5 L193,48.5" fill="none" stroke="#c0c0c0" stroke-width="1"/>
<text y="330" fill="#ffffff" text-anchor="middle"><tspan x="655.5 662.5 669.5 676.5 683.5 690.5" style='font-family:"Liberation Sans", sans-serif;font-size:13px'>1.2620</tspan></text>
<path d="M699,325.5 H707 M704,322.5 L707,325.5 L704,328.5" fill="none" stroke="#a0a0a0" stroke-width="1"/>
</g>
<rect x="748.5" y="108.5" width="40" height="15" fill="#0a5cff" stroke="#fff" stroke-width="1"/>
<text y="121" fill="#ffffff" text-anchor="middle"><tspan x="753 759 765 771 777 783" style='font-family:"Liberation Sans", sans-serif;font-size:12px'>1.2834</tspan></text>
<g fill="none" stroke="#3aa0ff" stroke-width="1" shape-rendering="crispEdges"><rect x="753.5" y="3.5" width="15" height="13"/><rect x="770.5" y="3.5" width="15" height="13"/></g>
<g fill="none" stroke="#3aa0ff" stroke-width="1"><path d="M755.5,9.5 L759.5,5.5 L759.5,7.5 L766.5,7.5 L766.5,11.5 L759.5,11.5 L759.5,13.5 Z"/><path d="M783.5,9.5 L779.5,5.5 L779.5,7.5 L772.5,7.5 L772.5,11.5 L779.5,11.5 L779.5,13.5 Z"/></g>
<rect x="657" y="355" width="90" height="43" fill="#fff"/>
<text y="368" fill="#ff0000" stroke="#ff0000" stroke-width="0.45" font-weight="bold" style="font-family:'Liberation Sans';font-size:14.5px"><tspan x="658">背</tspan><tspan x="675">离</tspan><tspan x="689">！</tspan></text>
<text y="368" fill="#ff0000" stroke="#ff0000" stroke-width="0.3" font-weight="bold" text-anchor="middle" style="font-family:'Liberation Mono';font-size:14px"><tspan x="713.5 723 731.5 739">BOLL</tspan></text>
<text y="384.5" fill="#ff0000" stroke="#ff0000" stroke-width="0.45" font-weight="bold" style="font-family:'Liberation Sans';font-size:14.5px"><tspan x="658">线</tspan><tspan x="675">下</tspan><tspan x="691.5">轨</tspan><tspan x="708.5">走</tspan><tspan x="725">平</tspan></text>
</svg></body></html>
